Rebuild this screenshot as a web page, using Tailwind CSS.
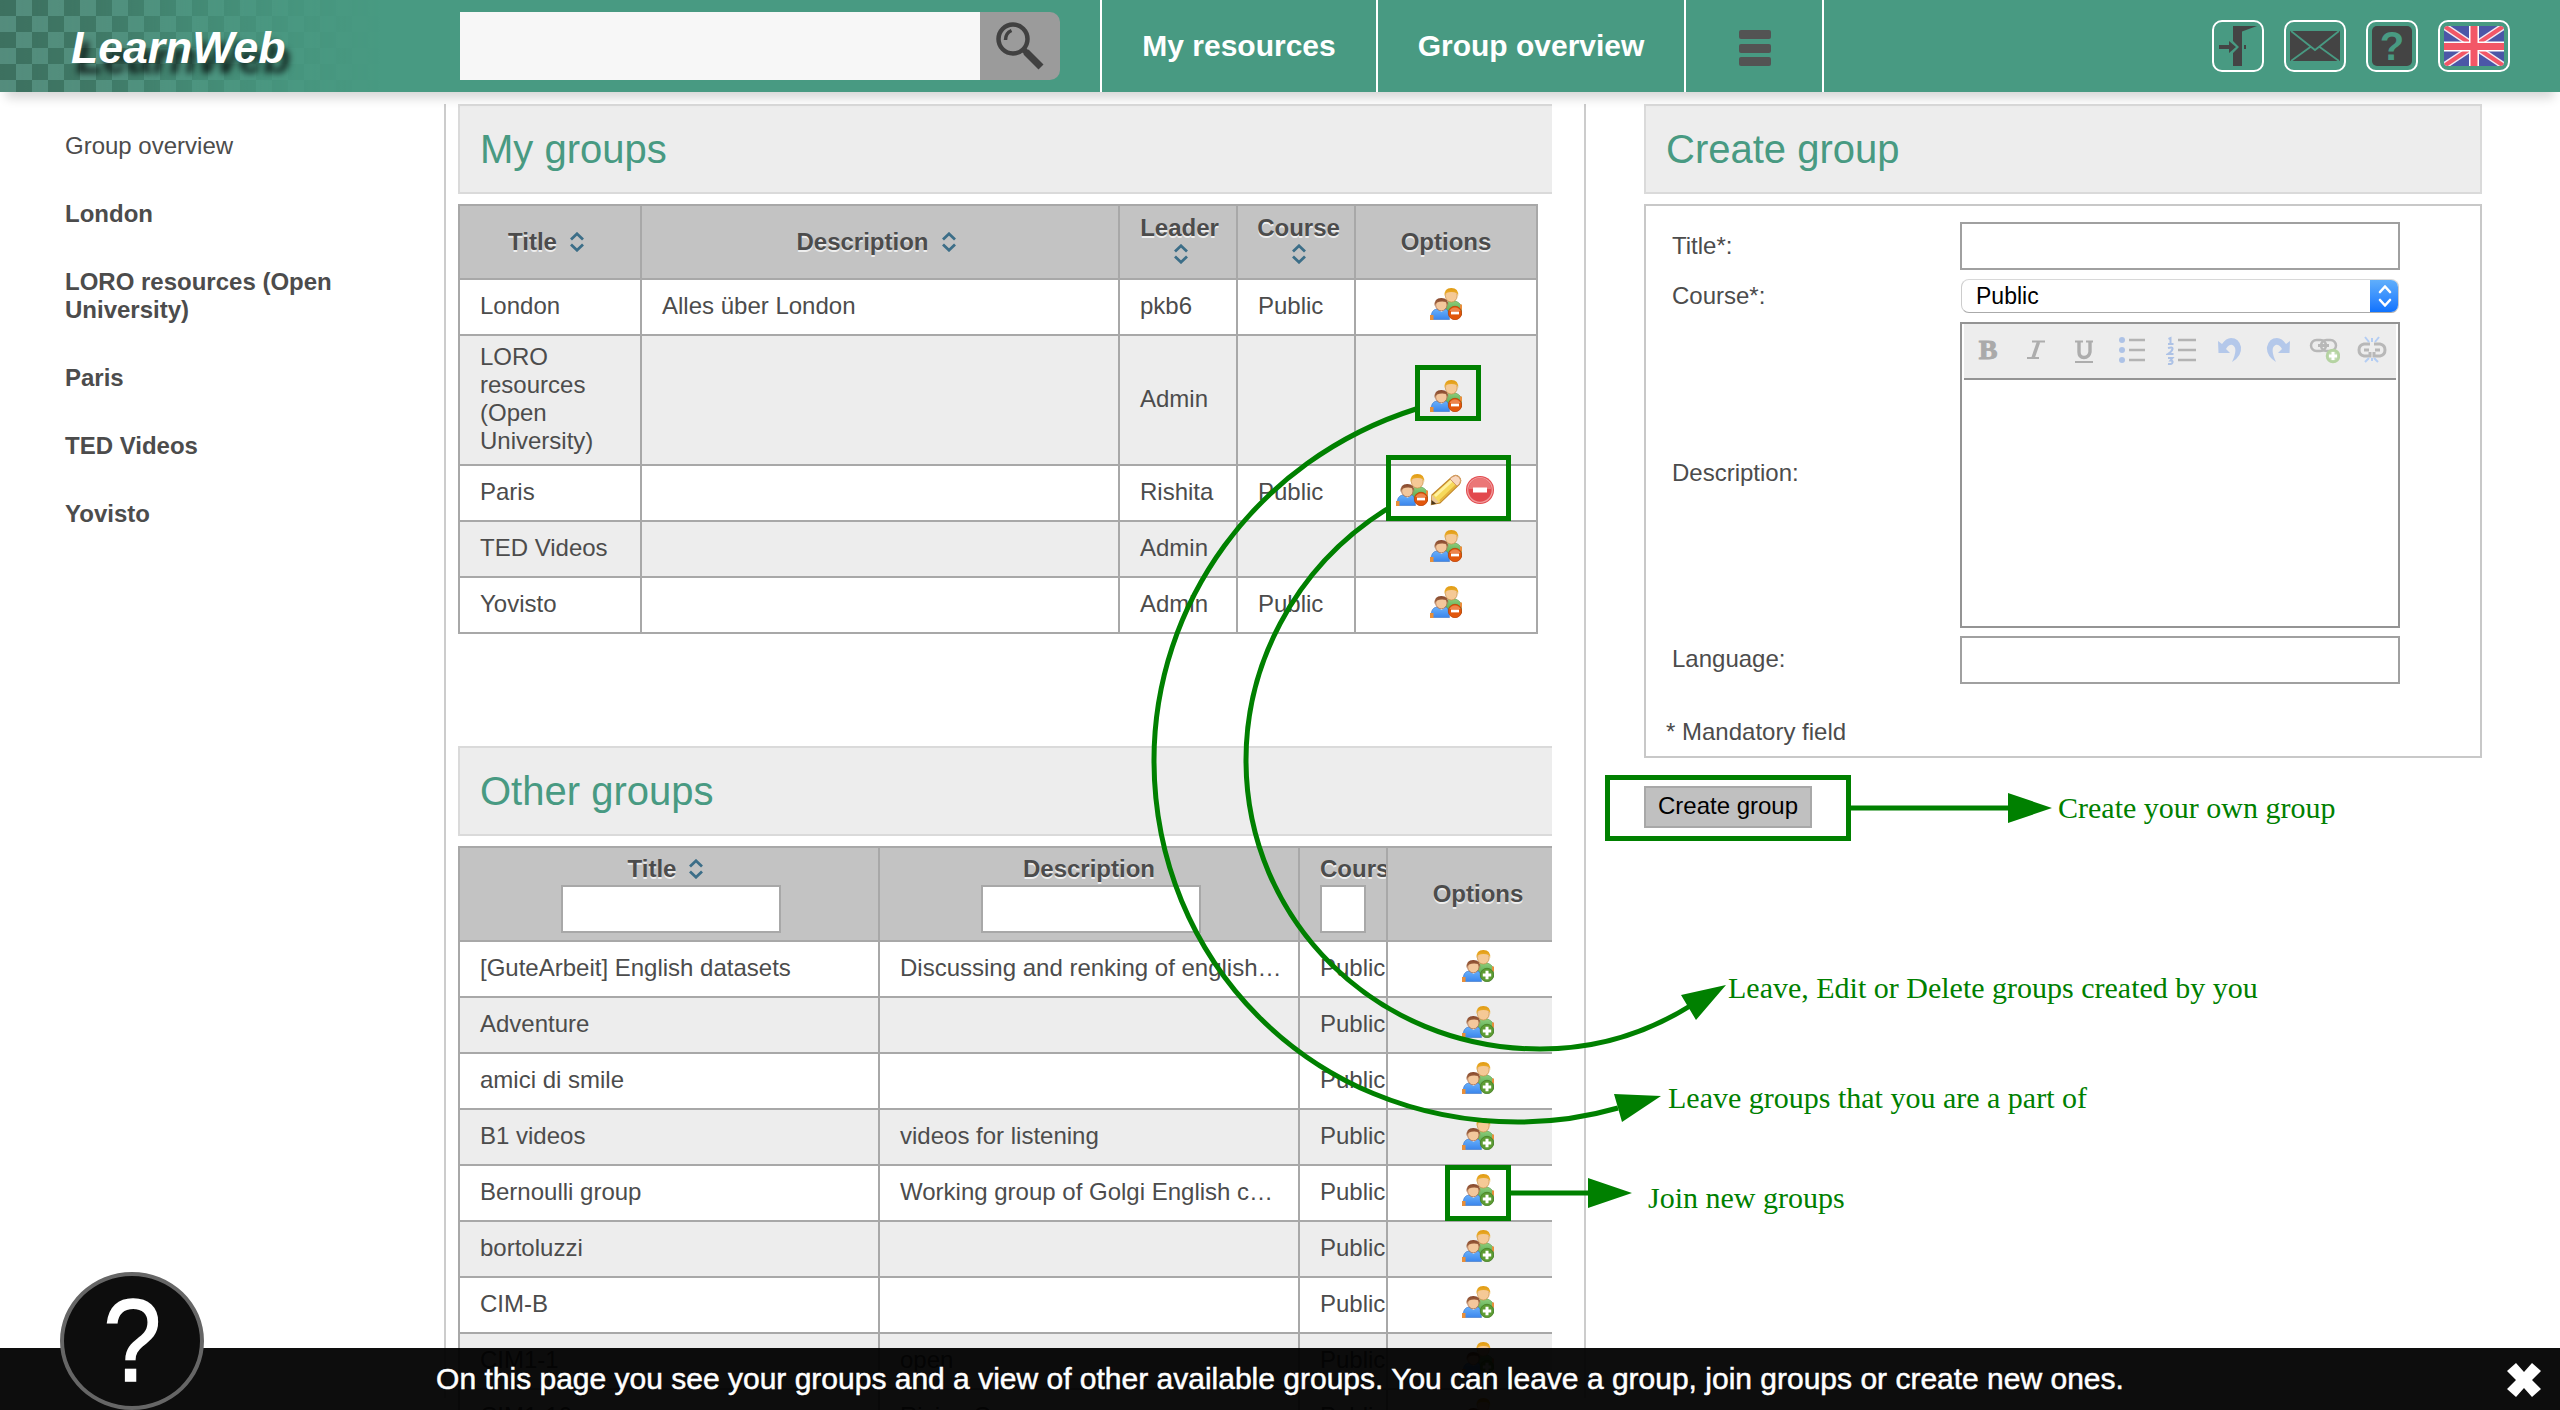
<!DOCTYPE html>
<html lang="en">
<head>
<meta charset="utf-8">
<title>LearnWeb - Group overview</title>
<script src="https://cdn.jsdelivr.net/npm/@tailwindcss/browser@4"></script>
</head>
<body class="relative flex h-[1410px] w-[2560px] flex-col overflow-hidden bg-white font-['Liberation_Sans',Arial,sans-serif] text-2xl leading-7 text-[#4c4c4c]">

<svg class="absolute h-0 w-0" aria-hidden="true">
  <defs>
    <symbol id="sort" viewBox="0 0 16 20"><path d="M2 7.500 8 1.800l6 5.700M2 12.500l6 5.700 6-5.700" fill="none" stroke="#3c6e88" stroke-width="2.800"/></symbol>
    <linearGradient id="hairA" x2="0" y2="1"><stop stop-color="#e09a10"/><stop offset="1" stop-color="#f0b53c"/></linearGradient>
    <linearGradient id="hairB" x2="0" y2="1"><stop stop-color="#85452a"/><stop offset="1" stop-color="#b07850"/></linearGradient>
    <linearGradient id="shirtG" x2="0" y2="1"><stop stop-color="#8ed07e"/><stop offset="1" stop-color="#4f9f43"/></linearGradient>
    <linearGradient id="shirtB" x2="0" y2="1"><stop stop-color="#68b0fb"/><stop offset="1" stop-color="#3b86ec"/></linearGradient>
    <symbol id="people" viewBox="0 0 32 32">
      <path d="M15 27V19q0-6 7-6.500 8 .5 9.500 6.500V27z" fill="url(#shirtG)" stroke="#5e9b54" stroke-width=".6"/>
      <path d="M30 16.500h2v5h-2z" fill="#e88e3c"/>
      <ellipse cx="21.300" cy="7.800" rx="5.900" ry="6.300" fill="#f5c996" stroke="#c98c43" stroke-width=".7"/>
      <path d="M14.500 8Q14 .2 21.300 0q7.500.2 6.900 8l-1.500-3q-5-2-10.500 0z" fill="url(#hairA)"/>
      <path d="M1 31.500q-.5-10 6-10.500h9q3 1 3.500 10.500z" fill="url(#shirtB)" stroke="#3974c6" stroke-width=".6"/>
      <path d="M0 27h3.500v5H0z" fill="#e98f38"/>
      <path d="m8 21.500 3.500 2.500 3.500-2.500z" fill="#e7f1ff"/>
      <ellipse cx="11.300" cy="17" rx="5.700" ry="5.800" fill="#f3c79c" stroke="#a86b48" stroke-width=".8"/>
      <path d="M4.500 18Q4 10.200 11.300 10q7.500.2 6.900 8-1-3-2.500-4-4.500-1-8.500.5-1.700 1-2.700 3.500z" fill="url(#hairB)"/>
    </symbol>
    <symbol id="leave" viewBox="0 0 32 32">
      <use href="#people"/>
      <circle cx="25" cy="25" r="6.700" fill="#e2570c" stroke="#bd4106" stroke-width=".8"/>
      <path d="M19.500 23a6 6 0 0 1 11 0z" fill="#ee854b"/>
      <rect x="21" y="23.600" width="8" height="2.800" fill="#fff"/>
    </symbol>
    <symbol id="join" viewBox="0 0 32 32">
      <use href="#people"/>
      <circle cx="25" cy="25" r="6.700" fill="#5d9c33" stroke="#467f27" stroke-width=".8"/>
      <path d="M25 20.800v8.400M20.800 25h8.400" stroke="#fff" stroke-width="3"/>
    </symbol>
  </defs>
</svg>

<header class="relative z-10 flex h-[92px] w-full shrink-0 items-center bg-[#489a82] shadow-[0_12px_10px_-6px_rgba(0,0,0,0.16)]">
  <div class="relative flex h-full w-[460px] items-center">
    <svg class="absolute top-0 left-0 h-[92px] w-[380px]" aria-hidden="true">
      <defs>
        <pattern id="checks" width="32" height="32" patternUnits="userSpaceOnUse"><rect width="32" height="32" fill="#548c7c"/><path d="M0 0h16v16H0zM16 16h16v16H16z" fill="#3d705f"/></pattern>
        <linearGradient id="fade"><stop stop-color="#fff"/><stop offset=".25" stop-color="#ccc"/><stop offset=".5" stop-color="#666"/><stop offset=".75" stop-color="#202020"/><stop offset="1" stop-color="#000"/></linearGradient>
        <mask id="m"><rect width="380" height="92" fill="url(#fade)"/></mask>
      </defs>
      <rect width="380" height="92" fill="url(#checks)" mask="url(#m)"/>
    </svg>
    <h1 class="relative pt-1 pl-[71px] text-[44.500px] leading-none font-bold text-white italic [text-shadow:5px_10px_6px_rgba(0,0,0,0.75)]">LearnWeb</h1>
  </div>
  <div class="flex h-[68px] w-[600px]">
    <div class="flex-1 bg-[#f7f7f7]"></div>
    <div class="flex w-20 items-center justify-center rounded-r-[10px] bg-[#9b9b9b]">
      <svg class="h-12 w-12" viewBox="0 0 48 48" fill="none" stroke="#414141"><circle cx="17" cy="17" r="14.500" stroke-width="4.500"/><path d="M9.500 18q0-7 6-9.500" stroke-width="3.500"/><path d="m27 27 4 4" stroke-width="6"/><path d="m30 30 15 15" stroke-width="7"/></svg>
    </div>
  </div>
  <nav class="ml-10 flex h-full text-3xl font-bold text-white">
    <a class="flex w-[276px] items-center justify-center border-l-2 border-white">My resources</a>
    <a class="flex w-[308px] items-center justify-center border-l-2 border-white">Group overview</a>
    <a class="flex w-[140px] flex-col items-center justify-center gap-[4.500px] border-x-2 border-white pt-1 pl-0.5">
      <span class="h-[9px] w-8 rounded-xs bg-[#535353]"></span><span class="h-[9px] w-8 rounded-xs bg-[#535353]"></span><span class="h-[9px] w-8 rounded-xs bg-[#535353]"></span>
    </a>
  </nav>
  <div class="ml-auto flex gap-5 pr-[50px]">
    <div class="flex h-[52px] w-[52px] items-center justify-center rounded-[10px] border-2 border-white">
      <svg class="h-10 w-10" viewBox="0 0 40 40" fill="#444"><path d="M15 0h24L24 5.500V40h-9V27l6-6-6-6z"/><path d="M1 19h10v-4l7 6-7 6v-4H1zM26 19h2v4h-2z"/></svg>
    </div>
    <div class="flex h-[52px] w-[62px] items-center justify-center rounded-[10px] border-2 border-white">
      <svg class="h-[30px] w-[50px]" viewBox="0 0 50 30"><path d="M0 0h50v30H0z" fill="#444"/><path d="m1 0 24 19L49 0M1 30l20-14.500M49 30 29 15.500" fill="none" stroke="#489a82" stroke-width="1.800"/></svg>
    </div>
    <div class="flex h-[52px] w-[52px] items-center justify-center rounded-[10px] border-2 border-white">
      <div class="flex h-10 w-10 items-center justify-center rounded-[5px] bg-[#444] text-[40px] font-bold text-[#489a82]">?</div>
    </div>
    <div class="flex h-[52px] w-[72px] items-center justify-center rounded-[10px] border-2 border-white">
      <svg class="h-10 w-[60px] rounded" viewBox="0 0 60 40"><path d="M0 0h60v40H0z" fill="#4b57a7"/><path d="m0 0 60 40M60 0 0 40" stroke="#f1e8f2" stroke-width="7"/><path d="m0 0 60 40M60 0 0 40" stroke="#f25767" stroke-width="4.200"/><path d="M30 0v40M0 20.500h60" stroke="#fff" stroke-width="10"/><path d="M30 0v40M0 20.500h60" stroke="#f25767" stroke-width="7"/></svg>
    </div>
  </div>
</header>

<main class="flex h-[1306px] pt-3">
  <aside class="flex w-[446px] shrink-0 flex-col gap-10 border-r-2 border-[#ccc] pt-7 pr-20 pl-[65px] font-bold">
    <a class="font-normal">Group overview</a>
    <a>London</a>
    <a>LORO resources (Open University)</a>
    <a>Paris</a>
    <a>TED Videos</a>
    <a>Yovisto</a>
  </aside>

  <section class="w-[1140px] shrink-0 border-r-2 border-[#ccc] pl-3">
    <div class="h-[1306px] w-[1094px] overflow-hidden">
      <h2 class="flex h-[90px] items-center border-2 border-r-0 border-[#dadada] bg-[#ededed] pl-5 text-[40px] text-[#489a82]">My groups</h2>
      <table class="mt-2.5 w-[1080px] table-fixed border-collapse [&_td]:border-2 [&_td]:border-[#a8a8a8] [&_td]:px-5 [&_td]:pt-0 [&_td]:pb-0.5 [&_th]:border-2 [&_th]:border-[#a8a8a8] [&_th]:p-0 [&_th]:[text-shadow:0_2px_0_#eee]">
        <colgroup><col class="w-[182px]"><col class="w-[478px]"><col class="w-[118px]"><col class="w-[118px]"><col class="w-[182px]"></colgroup>
        <thead><tr class="h-[74px] bg-[#c3c3c3]">
          <th><div class="flex items-center justify-center">Title<svg class="mr-[7px] ml-3 h-5 w-4"><use href="#sort"/></svg></div></th>
          <th><div class="flex items-center justify-center">Description<svg class="mr-[7px] ml-3 h-5 w-4"><use href="#sort"/></svg></div></th>
          <th><div class="flex flex-col items-center pb-1.5 pl-[3px]">Leader<svg class="mt-0.5 ml-[3px] h-5 w-4"><use href="#sort"/></svg></div></th>
          <th><div class="flex flex-col items-center pb-1.5 pl-[5px]">Course<svg class="mt-0.5 ml-px h-5 w-4"><use href="#sort"/></svg></div></th>
          <th>Options</th>
        </tr></thead>
        <tbody>
          <tr class="h-14"><td>London</td><td>Alles über London</td><td>pkb6</td><td>Public</td><td><svg class="mx-auto mb-1 h-8 w-8"><use href="#leave"/></svg></td></tr>
          <tr class="h-[130px] bg-[#ededed]"><td>LORO resources (Open University)</td><td></td><td>Admin</td><td></td><td><svg class="mx-auto mb-1.5 h-8 w-8"><use href="#leave"/></svg></td></tr>
          <tr class="h-14"><td>Paris</td><td></td><td>Rishita</td><td>Public</td><td><div class="mb-1 flex justify-center gap-0.5">
            <svg class="h-8 w-8"><use href="#leave"/></svg>
            <svg class="h-8 w-8" viewBox="0 0 32 32"><path d="M2 21 22 3q4-3 7 0t.5 7L10 29l-8.500 1.500z" fill="#f6d95b" stroke="#c0862e" stroke-width="1.300"/><path d="M5 22 22 6.500" stroke="#fff1a0" stroke-width="3"/><path d="m10 27 16-15.500" stroke="#e3b23c" stroke-width="2"/><path d="M22 3q4-3 7 0t.5 7l-2.500 2-7-7z" fill="#f8d7bd" stroke="#d49a69"/><path d="m2 21 7 7.500-7.500 2z" fill="#e9c79a"/><path d="m1.500 26-.2 4.800 5-1z" fill="#4e381b"/></svg>
            <svg class="h-8 w-8" viewBox="0 0 32 32"><circle cx="16" cy="16" r="14" fill="#e2494d"/><circle cx="16" cy="16" r="12.300" fill="none" stroke="#f09b9c" stroke-width="1.300"/><path d="M5 15a11 11 0 0 1 22 0z" fill="#eb7777"/><rect x="9" y="13.500" width="14" height="5" fill="#fff"/></svg>
          </div></td></tr>
          <tr class="h-14 bg-[#ededed]"><td>TED Videos</td><td></td><td>Admin</td><td></td><td><svg class="mx-auto mb-1 h-8 w-8"><use href="#leave"/></svg></td></tr>
          <tr class="h-14"><td>Yovisto</td><td></td><td>Admin</td><td>Public</td><td><svg class="mx-auto mb-1 h-8 w-8"><use href="#leave"/></svg></td></tr>
        </tbody>
      </table>

      <h2 class="mt-28 flex h-[90px] items-center border-2 border-r-0 border-[#dadada] bg-[#ededed] pl-5 text-[40px] text-[#489a82]">Other groups</h2>
      <table class="mt-2.5 w-[1112px] table-fixed border-collapse [&_td]:overflow-hidden [&_td]:border-2 [&_td]:border-[#a8a8a8] [&_td]:px-5 [&_td]:pt-0 [&_td]:pb-0.5 [&_td]:whitespace-nowrap [&_th]:overflow-hidden [&_th]:border-2 [&_th]:border-[#a8a8a8] [&_th]:p-0 [&_th]:[text-shadow:0_2px_0_#eee]">
        <colgroup><col class="w-[420px]"><col class="w-[420px]"><col class="w-[88px]"><col class="w-[182px]"></colgroup>
        <thead><tr class="h-[94px] bg-[#c3c3c3]">
          <th><div class="flex items-center justify-center pl-px">Title<svg class="mr-[7px] ml-3 h-5 w-4"><use href="#sort"/></svg></div><div class="ml-[101px] mt-0.5 h-12 w-[220px] border-2 border-[#a8a8a8] bg-white"></div></th>
          <th><div>Description</div><div class="ml-[101px] mt-0.5 h-12 w-[220px] border-2 border-[#a8a8a8] bg-white"></div></th>
          <th><div class="pl-5 text-left">Course</div><div class="mt-0.5 ml-5 h-12 w-[46px] border-2 border-[#a8a8a8] bg-white"></div></th>
          <th>Options</th>
        </tr></thead>
        <tbody>
          <tr class="h-14"><td>[GuteArbeit] English datasets</td><td>Discussing and renking of english…</td><td>Public</td><td><svg class="mx-auto mb-1 h-8 w-8"><use href="#join"/></svg></td></tr>
          <tr class="h-14 bg-[#ededed]"><td>Adventure</td><td></td><td>Public</td><td><svg class="mx-auto mb-1 h-8 w-8"><use href="#join"/></svg></td></tr>
          <tr class="h-14"><td>amici di smile</td><td></td><td>Public</td><td><svg class="mx-auto mb-1 h-8 w-8"><use href="#join"/></svg></td></tr>
          <tr class="h-14 bg-[#ededed]"><td>B1 videos</td><td>videos for listening</td><td>Public</td><td><svg class="mx-auto mb-1 h-8 w-8"><use href="#join"/></svg></td></tr>
          <tr class="h-14"><td>Bernoulli group</td><td>Working group of Golgi English c…</td><td>Public</td><td><svg class="mx-auto mb-1 h-8 w-8"><use href="#join"/></svg></td></tr>
          <tr class="h-14 bg-[#ededed]"><td>bortoluzzi</td><td></td><td>Public</td><td><svg class="mx-auto mb-1 h-8 w-8"><use href="#join"/></svg></td></tr>
          <tr class="h-14"><td>CIM-B</td><td></td><td>Public</td><td><svg class="mx-auto mb-1 h-8 w-8"><use href="#join"/></svg></td></tr>
          <tr class="h-14 bg-[#ededed]"><td>CIM1-1</td><td>open</td><td>Public</td><td><svg class="mx-auto mb-1 h-8 w-8"><use href="#join"/></svg></td></tr>
          <tr class="h-14"><td>CIM1-10</td><td>Rising G</td><td>Public</td><td><svg class="mx-auto mb-1 h-8 w-8"><use href="#join"/></svg></td></tr>
        </tbody>
      </table>
    </div>
  </section>

  <section class="ml-[58px] w-[838px] shrink-0">
    <h2 class="flex h-[90px] items-center border-2 border-[#dadada] bg-[#ededed] pl-5 text-[40px] text-[#489a82]">Create group</h2>
    <form class="mt-2.5 h-[554px] border-2 border-[#c8c8c8] pt-4">
      <div class="grid grid-cols-[288px_440px] items-center pl-[26px]">
        <label>Title*:</label><div class="h-12 border-2 border-[#a0a0a0]"></div>
        <label>Course*:</label>
        <div class="mx-px mt-[9px] mb-[9px] flex h-[34px] items-stretch overflow-hidden rounded-lg border border-t-[#d8d8d8] border-r-[#ccc] border-b-[#aaa] border-l-[#ccc] text-[23px] text-black">
          <div class="flex flex-1 items-center pl-3.5">Public</div>
          <div class="-my-px -mr-px flex w-[29px] items-center justify-center bg-linear-to-b from-[#62b0fb] to-[#0a70fe]"><svg class="h-6 w-4" viewBox="0 0 16 24" fill="none" stroke="#fff" stroke-width="2.600" stroke-linecap="round" stroke-linejoin="round"><path d="m3 8 5-5.500L13 8M3 16l5 5.500 5-5.500"/></svg></div>
        </div>
        <label class="pb-1">Description:</label>
        <div class="flex h-[306px] flex-col border-2 border-[#949494] px-0.5">
          <div class="grid h-14 grid-cols-9 items-center justify-items-center border-b-2 border-[#949494] bg-[#ededed] pb-0.5 text-[#aaa]">
            <b class="font-['Liberation_Serif',serif] text-[28px] leading-none [-webkit-text-stroke:1px_#aaa]">B</b>
            <svg class="h-8 w-8" viewBox="0 0 32 32" fill="none" stroke="#adadad" stroke-width="2.200"><path d="M12 7.500h13M7 24h12"/><path d="M18.500 8 13 24" stroke-width="3.500"/></svg>
            <svg class="h-8 w-8" viewBox="0 0 32 32" fill="none" stroke="#adadad" stroke-width="2.200"><path d="M7 7.500h8M18 7.500h7M7 28h18"/><path d="M11 8v10q0 5.500 5 5.500t6-5.500V8" stroke-width="3.400"/></svg>
            <svg class="ml-1 h-8 w-8" viewBox="0 0 32 32"><path d="M11 6h16M11 16h16M11 26h16" stroke="#b3b3b3" stroke-width="2.400"/><g fill="#adc2e6"><circle cx="4" cy="6" r="3"/><circle cx="4" cy="16" r="3"/><circle cx="4" cy="26" r="3"/></g></svg>
            <svg class="ml-1 h-8 w-8" viewBox="0 0 32 32" fill="none"><path d="M12 6h18M12 16h18M12 26h18" stroke="#b3b3b3" stroke-width="2.400"/><path d="m2.500 5 2-1v6M2 10h5.500M2 14q5-1.500 4.500 1T2 20h5.500M2 24h4.500l-2 2.500q2.500 0 2 2t-4.500 1.500" stroke="#adc2e6" stroke-width="2"/></svg>
            <svg class="ml-1 h-8 w-8" viewBox="0 0 32 32"><path d="m4 7 .5 12H16l-4-4q3-5 6.500-4 6 3-.5 17 10-6 9-15Q25 4 17 4q-5 0-9 6z" fill="#b4c8ea"/></svg>
            <svg class="ml-1 h-8 w-8" viewBox="0 0 32 32"><path d="m28 7-.5 12H16l4-4q-3-5-6.500-4-6 3 .5 17-10-6-9-15Q7 4 15 4q5 0 9 6z" fill="#b4c8ea"/></svg>
            <svg class="h-8 w-8" viewBox="0 0 32 32" fill="none" stroke="#b8b8b8" stroke-width="2.500"><rect x="3" y="6" width="15" height="11" rx="5.500"/><rect x="13" y="6" width="15" height="11" rx="5.500"/><path d="M10 11.500h11" stroke-width="3"/><circle cx="25" cy="22" r="6" fill="#c3dcb4" stroke="#b5d3a2"/><path d="M25 18v8M21 22h8" stroke="#fff" stroke-width="3"/></svg>
            <svg class="h-8 w-8" viewBox="0 0 32 32" fill="none" stroke="#b8b8b8" stroke-width="3"><path d="M14 10H8q-5 1-5 6t5 6h6v-4M18 10h6q5 1 5 6t-5 6h-6v-4M8 16h5M19 16h5"/><path d="m9 3 4 5M16 4v4M23 3l-4 5M9 28l4-4M16 27v-3M22 28l-4-4" stroke="#b4cdf3" stroke-width="2"/></svg>
          </div>
        </div>
        <label class="pt-1.5">Language:</label><div class="mt-2 h-12 border-2 border-[#a0a0a0]"></div>
      </div>
      <p class="mt-[34px] pl-5">* Mandatory field</p>
    </form>
    <button class="mt-7 flex h-[42px] w-[168px] items-center justify-center border-2 border-[#a8a8a8] bg-[#c0c0c0] pb-0.5 text-black">Create group</button>
  </section>
</main>

<!-- help annotations drawn over the page -->
<svg class="absolute inset-0 h-[1410px] w-[2560px]" viewBox="0 0 2560 1410">
  <g fill="none" stroke="#008000" stroke-width="5">
    <rect x="1417.500" y="367.500" width="61" height="51"/>
    <rect x="1388.500" y="457.500" width="120" height="61"/>
    <rect x="1447.500" y="1167.500" width="61" height="51"/>
    <rect x="1607.500" y="777.500" width="241" height="61"/>
    <path d="M1416 409C1255 460 1154 605 1154 760C1154 960 1310 1122 1518 1122C1555 1122 1590 1116 1618 1108"/>
    <path d="M1387 509C1290 570 1246 670 1246 760C1246 920 1376 1049 1540 1049C1595 1049 1645 1034 1690 1006"/>
    <path d="M1510 1193h80M1851 808h160"/>
  </g>
  <path d="m1614 1094 47 2-39 26zM1681 995l45-10-30 35zM1588 1178l44 15-44 15zM2008 793l44 15-44 15z" fill="#008000"/>
  <g class="font-['Liberation_Serif','Times_New_Roman',serif] text-3xl" fill="#008000">
    <text x="2058" y="818">Create your own group</text>
    <text x="1728" y="998">Leave, Edit or Delete groups created by you</text>
    <text x="1668" y="1108">Leave groups that you are a part of</text>
    <text x="1648" y="1208">Join new groups</text>
  </g>
</svg>

<footer class="absolute inset-x-0 bottom-0 z-20 flex h-[62px] items-center justify-center bg-black/95 text-[30px] text-white">
  <p class="whitespace-nowrap [-webkit-text-stroke:0.5px_white]">On this page you see your groups and a view of other available groups. You can leave a group, join groups or create new ones.</p>
  <svg class="absolute top-3.5 right-[19px] h-9 w-[34px]" viewBox="0 0 34 36"><path d="m9 1 8 9 8-9 9 8-9 9 9 9-9 8-8-9-8 9-9-8 9-9-9-9z" fill="#fff"/></svg>
</footer>
<div class="absolute top-[1272px] left-[60px] z-30 flex h-[138px] w-36 items-center justify-center rounded-[50%] border-4 border-[#666] bg-[#0d0d0d] text-[116px] leading-none text-white"><span class="scale-x-90 [-webkit-text-stroke:1.500px_white]">?</span></div>
</body>
</html>
